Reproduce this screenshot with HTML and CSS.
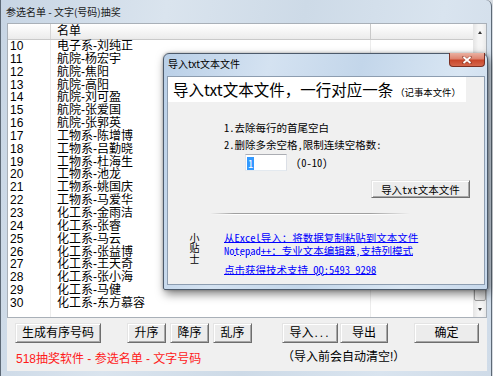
FILE: index.html
```html
<!DOCTYPE html>
<html lang="zh-CN">
<head>
<meta charset="utf-8">
<title>参选名单 - 文字(号码)抽奖</title>
<link rel="stylesheet" href="styles.css">
</head>
<body>
<div class="win">
  <div class="titlebar"><span class="title">参选名单 - 文字(号码)抽奖</span></div>
  <div class="client">
    <div class="listbox">
      <div class="listmain">
        <div class="lhead"><div class="c1"></div><div class="c2">名单</div><div class="c3"></div></div>
        <div class="lbody">
          <div class="row"><div class="c1">10</div><div class="c2">电子系-刘纯正</div></div>
          <div class="row"><div class="c1">11</div><div class="c2">航院-杨宏宇</div></div>
          <div class="row"><div class="c1">12</div><div class="c2">航院-焦阳</div></div>
          <div class="row"><div class="c1">13</div><div class="c2">航院-高阳</div></div>
          <div class="row"><div class="c1">14</div><div class="c2">航院-刘可盈</div></div>
          <div class="row"><div class="c1">15</div><div class="c2">航院-张爱国</div></div>
          <div class="row"><div class="c1">16</div><div class="c2">航院-张郭英</div></div>
          <div class="row"><div class="c1">17</div><div class="c2">工物系-陈增博</div></div>
          <div class="row"><div class="c1">18</div><div class="c2">工物系-吕勤晓</div></div>
          <div class="row"><div class="c1">19</div><div class="c2">工物系-杜海生</div></div>
          <div class="row"><div class="c1">20</div><div class="c2">工物系-池龙</div></div>
          <div class="row"><div class="c1">21</div><div class="c2">工物系-姚国庆</div></div>
          <div class="row"><div class="c1">22</div><div class="c2">工物系-马爱华</div></div>
          <div class="row"><div class="c1">23</div><div class="c2">化工系-金雨洁</div></div>
          <div class="row"><div class="c1">24</div><div class="c2">化工系-张睿</div></div>
          <div class="row"><div class="c1">25</div><div class="c2">化工系-马云</div></div>
          <div class="row"><div class="c1">26</div><div class="c2">化工系-张益博</div></div>
          <div class="row"><div class="c1">27</div><div class="c2">化工系-王天奇</div></div>
          <div class="row"><div class="c1">28</div><div class="c2">化工系-张小海</div></div>
          <div class="row"><div class="c1">29</div><div class="c2">化工系-马健</div></div>
          <div class="row"><div class="c1">30</div><div class="c2">化工系-东方慕容</div></div>
        </div>
      </div>
      <div class="vscroll">
        <div class="sbtn"><span class="arr-up"></span></div>
        <div class="track"><div class="thumb"></div></div>
        <div class="sbtn"><span class="arr-down"></span></div>
      </div>
    </div>
    <div class="btnrow">
      <button class="btn b-gen">生成有序号码</button>
      <button class="btn b-sort b-asc">升序</button>
      <button class="btn b-sort b-near">降序</button>
      <button class="btn b-sort b-near">乱序</button>
      <button class="btn b-imp">导入<span class="dots">...</span></button>
      <button class="btn b-exp">导出</button>
      <button class="btn b-ok">确定</button>
    </div>
    <div class="foot">
      <span class="brand">518抽奖软件 - 参选名单 - 文字号码</span>
      <span class="note">（导入前会自动清空!）</span>
    </div>
  </div>
</div>

<div class="dlg">
  <div class="dtitlebar">
    <span class="dtitle">导入txt文本文件</span>
    <div class="dclose">
      <svg width="10" height="8" viewBox="0 0 10 8"><path d="M1.5 1 L8.5 7 M8.5 1 L1.5 7" stroke="#6b2a1e" stroke-width="3" stroke-linecap="square" opacity="0.45"/><path d="M1.5 1 L8.5 7 M8.5 1 L1.5 7" stroke="#fff" stroke-width="1.8"/></svg>
    </div>
  </div>
  <div class="dclient">
    <div class="dhead"><span class="big">导入txt文本文件，一行对应一条</span><span class="small">（记事本文件）</span></div>
    <div class="opts">
      <div>1.去除每行的首尾空白</div>
      <div>2.删除多余空格,限制连续空格数:</div>
      <div class="inrow">
        <div class="inbox"><span class="sel">1</span></div>
        <span class="range">(0-10)</span>
      </div>
    </div>
    <div class="btnline"><button class="btn dbtn">导入txt文本文件</button></div>
    <div class="sep"></div>
    <div class="tips">
      <div class="tipl">小贴士</div>
      <div class="links">
        <a href="#">从Excel导入：将数据复制粘贴到文本文件</a>
        <a href="#">Notepad++：专业文本编辑器,支持列模式</a>
        <a href="#" class="qq">点击获得技术支持 QQ:5493 9298</a>
      </div>
    </div>
  </div>
</div>
</body>
</html>
```
FILE: styles.css
```css
* { box-sizing: border-box; }
html, body { margin: 0; padding: 0; }
body {
  width: 493px; height: 376px; overflow: hidden; position: relative;
  background: #d6dbe1;
  font-family: "Liberation Sans", "Noto Sans CJK SC", sans-serif;
  font-size: 12px; color: #000;
}

/* main window */
.win {
  width: 492px; height: 376px;
  display: flex; flex-direction: column;
  padding: 0 4px 5px 6px;
  border-left: 1px solid #5d6976;
  border-right: 1px solid #5d6976;
  border-radius: 0 6px 0 0;
  background: linear-gradient(100deg, #c7d5e4 0%, #dae4ee 30%, #cddae7 55%, #d9e4ef 80%, #cfdbe8 100%);
}
.titlebar { height: 23px; display: flex; align-items: center; }
.title {
  margin-left: -1px;
  font-family: "Noto Sans CJK SC", sans-serif;
  font-size: 10px; line-height: 12px; color: #1a1a1a;
}
.client {
  flex: 1; display: flex; flex-direction: column;
  background: #f0f0f0;
}

/* list */
.listbox {
  height: 295px; display: flex;
  border: 1px solid #a9b0b8;
  background: #fff;
}
.listmain { flex: 1; min-width: 0; display: flex; flex-direction: column; }
.lhead {
  height: 16px; display: flex; line-height: 15px;
  background: linear-gradient(#ffffff 0%, #f6f6f6 45%, #ebebeb 100%);
  border-bottom: 1px solid #c9c9c9;
}
.lhead .c1 { width: 43px; border-right: 1px solid #d5d5d5; }
.lhead .c2 { width: 320px; padding-left: 6px; border-right: 1px solid #c9c9c9; }
.lhead .c3 { flex: 1; }
.lbody {
  flex: 1;
  background:
    linear-gradient(#ececec, #ececec) 42px 0 / 1px 100% no-repeat,
    linear-gradient(#ececec, #ececec) 362px 0 / 1px 100% no-repeat,
    #fff;
}
.row { display: flex; height: 12.85px; line-height: 12.85px; white-space: nowrap; }
.row .c1 { width: 43px; padding-left: 2px; }
.row .c2 { padding-left: 6px; }

/* scrollbar */
.vscroll {
  width: 13px; display: flex; flex-direction: column;
  background: linear-gradient(to right, #e7e7e7, #f5f5f5 35%, #f5f5f5 65%, #e9e9e9);
  border-left: 1px solid #e6e6e6;
}
.sbtn { height: 16px; display: flex; align-items: center; justify-content: center; }
.arr-up { width: 0; height: 0; border-left: 2.5px solid transparent; border-right: 2.5px solid transparent; border-bottom: 3px solid #333; }
.arr-down { width: 0; height: 0; border-left: 2.5px solid transparent; border-right: 2.5px solid transparent; border-top: 3px solid #333; }
.track { flex: 1; display: flex; flex-direction: column; }
.thumb {
  margin-top: 78px; flex: 1;
  border: 1px solid #9a9a9a; border-radius: 2px;
  background: linear-gradient(to right, #f3f3f3, #e2e2e2 60%, #d6d6d6);
}

/* buttons */
.btn {
  height: 20px; padding: 0; margin: 0;
  font-family: "Liberation Sans", "Noto Sans CJK SC", sans-serif;
  font-size: 12px; line-height: 17px; color: #000;
  background: #ececec;
  border-style: solid; border-width: 1px;
  border-color: #e4e4e4 #6e6e6e #6e6e6e #e4e4e4;
  box-shadow: inset 1px 1px 0 #ffffff, inset -1px -1px 0 #a7a7a7;
}
.dots { letter-spacing: 2px; margin-left: 1px; }
.btnrow { display: flex; height: 20px; margin-top: 5px; padding-left: 8px; }
.b-gen { width: 86px; }
.b-sort { width: 39px; }
.b-asc { margin-left: 26px; }
.b-near { margin-left: 4px; }
.b-imp { width: 56px; margin-left: 30px; }
.b-exp { width: 48px; margin-left: 2px; }
.b-ok { width: 65px; margin-left: 26px; }

.foot {
  display: grid; grid-template-columns: 275px auto;
  padding-top: 8px; line-height: 16px; white-space: nowrap;
}
.brand { padding-left: 9px; color: #ff1a1a; }
.note { color: #000; margin-top: -2px; }

/* dialog */
.dlg {
  position: absolute; left: 163px; top: 53px;
  width: 325px; height: 237px;
  display: flex; flex-direction: column;
  padding: 0 2px 4px 3px;
  border: 1px solid #4c5a6b;
  border-radius: 6px 6px 2px 2px;
  background: linear-gradient(105deg, #b9cfe7 0%, #d4e2f1 28%, #c3d6ea 52%, #d9e6f3 78%, #c7d8eb 100%);
  box-shadow: 2px 4px 10px rgba(0, 0, 0, 0.5), 0 0 3px rgba(0,0,0,0.3);
}
.dtitlebar { height: 22px; display: flex; align-items: flex-start; }
.dtitle {
  margin: 4px 0 0 1px;
  font-family: "Noto Sans CJK SC", sans-serif;
  font-size: 10px; line-height: 12px; color: #000;
}
.dclose {
  margin: -1px 0 0 auto; width: 36px; height: 14px;
  display: flex; align-items: center; justify-content: center;
  border: 1px solid #7a2f22; border-top: none;
  border-radius: 0 0 4px 4px;
  background: linear-gradient(#eab1a2 0%, #de8470 45%, #c9472b 55%, #d5674c 100%);
}
.dclient {
  flex: 1; background: #f0f0f0;
  border: 1px solid #8d9db0;
  font-family: "Noto Sans Mono CJK SC", "Liberation Mono", "Noto Sans CJK SC", monospace;
  font-size: 10.5px;
}
.dhead {
  width: 298px; height: 25px; background: #fff;
  padding-left: 5px; line-height: 25px; white-space: nowrap;
  font-family: "Noto Sans CJK SC", sans-serif;
}
.big { font-size: 15.5px; }
.small { font-size: 9.4px; margin-left: 2px; }
.opts { margin: 16.5px 0 0 56px; line-height: 17px; white-space: nowrap; }
.inrow { display: flex; align-items: center; height: 17px; margin: 1.5px 0 0 21px; }
.inbox {
  width: 42px; height: 17px; background: #fff;
  border: 1px solid; border-color: #abadb3 #dbdfe6 #e3e9ef #e2e3ea;
  padding: 0 0 0 1px;
}
.sel {
  display: inline-block; height: 13px; line-height: 13px; padding: 0 1px;
  background: #3399ff; color: #fff;
}
.range { margin-left: 9px; }
.btnline { margin: 9px 0 0 203px; }
.dbtn {
  width: 99px; height: 18px; line-height: 15px;
  font-family: "Noto Sans Mono CJK SC", "Liberation Mono", "Noto Sans CJK SC", monospace;
  font-size: 10.5px;
}
.sep {
  margin: 15px 0 0 42px; width: 200px; height: 2px;
  background:
    linear-gradient(to right, rgba(160,160,160,0), #a0a0a0 12%, #a0a0a0 80%, rgba(160,160,160,0)) top / 100% 1px no-repeat,
    linear-gradient(to right, rgba(255,255,255,0), #fff 12%, #fff 80%, rgba(255,255,255,0)) bottom / 100% 1px no-repeat;
}
.tips { display: flex; margin-top: 17px; }
.tipl {
  margin: 1px 0 0 21px; width: 10px; height: 32px;
  writing-mode: vertical-rl;
  font-family: "Noto Sans CJK SC", sans-serif;
  font-size: 10px; line-height: 10px; letter-spacing: 0.5px;
}
.links { margin-left: 25px; line-height: 12.5px; white-space: nowrap; }
.links a { display: block; color: #0000ff; text-decoration: underline; text-underline-offset: 0; }
.links a.qq { margin-top: 7px; }
```
